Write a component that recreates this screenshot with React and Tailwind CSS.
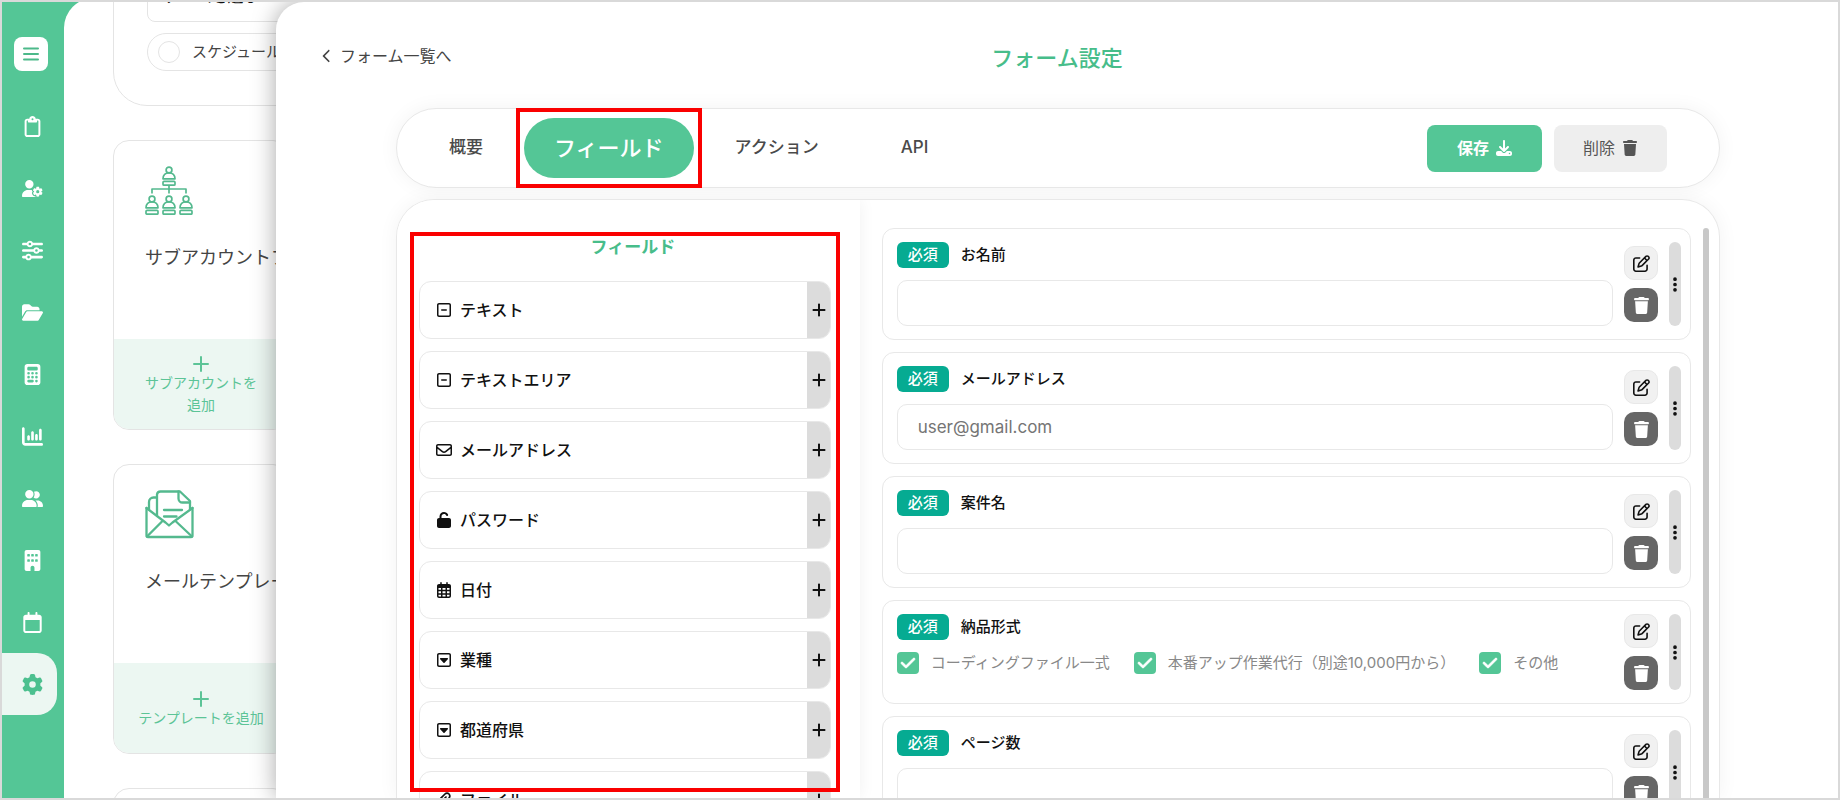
import React from 'react';
import {
  FaBuilding,
  FaCalculator,
  FaChartColumn,
  FaCheck,
  FaChevronLeft,
  FaDownload,
  FaEllipsisVertical,
  FaFolderOpen,
  FaGear,
  FaPaperclip,
  FaPlus,
  FaRegCalendar,
  FaRegCalendarDays,
  FaRegClipboard,
  FaRegEnvelope,
  FaRegPenToSquare,
  FaRegSquareCaretDown,
  FaRegSquareMinus,
  FaSliders,
  FaTrash,
  FaUnlock,
  FaUserGear,
  FaUserGroup,
} from 'react-icons/fa6';

const navItems = [
  { label: 'フォーム', icon: FaRegClipboard },
  { label: 'ユーザー設定', icon: FaUserGear },
  { label: '調整', icon: FaSliders },
  { label: 'フォルダ', icon: FaFolderOpen },
  { label: '計算', icon: FaCalculator },
  { label: '分析', icon: FaChartColumn },
  { label: '顧客', icon: FaUserGroup },
  { label: '会社', icon: FaBuilding },
  { label: 'カレンダー', icon: FaRegCalendar },
  { label: '設定', icon: FaGear, active: true },
];

const tabs = [
  { label: '概要' },
  { label: 'フィールド', active: true },
  { label: 'アクション' },
  { label: 'API' },
];

const fieldTypes = [
  { label: 'テキスト', icon: FaRegSquareMinus },
  { label: 'テキストエリア', icon: FaRegSquareMinus },
  { label: 'メールアドレス', icon: FaRegEnvelope },
  { label: 'パスワード', icon: FaUnlock },
  { label: '日付', icon: FaRegCalendarDays },
  { label: '業種', icon: FaRegSquareCaretDown },
  { label: '都道府県', icon: FaRegSquareCaretDown },
  { label: 'ファイル', icon: FaPaperclip },
];

const formFields = [
  { id: 'name', label: 'お名前' },
  { id: 'email', label: 'メールアドレス', placeholder: 'user@gmail.com' },
  { id: 'project', label: '案件名' },
  {
    id: 'delivery',
    label: '納品形式',
    options: ['コーディングファイル一式', '本番アップ作業代行（別途10,000円から）', 'その他'],
  },
  { id: 'pages', label: 'ページ数' },
];

const Person = ({ x, y }) => (
  <g>
    <circle cx={x} cy={y + 4} r="2.9" />
    <path d={`M${x - 6} ${y + 12.8}c0-3.6 2.4-6 6-6s6 2.4 6 6z`} />
    <rect x={x - 6} y={y + 15.4} width="12" height="3.8" rx="1" />
  </g>
);

const OrgIcon = () => (
  <svg viewBox="0 0 49 49" className="h-[49px] w-[49px] shrink-0" fill="none" stroke="#54b98e" strokeWidth="1.7" strokeLinejoin="round" aria-hidden="true">
    <Person x={24} y={0} />
    <Person x={7} y={29} />
    <Person x={24} y={29} />
    <Person x={41} y={29} />
    <path d="M24 19.4v8M7 27.5V23h34v4.5" />
  </svg>
);

const LetterIcon = () => (
  <svg viewBox="0 0 49 49" className="h-[49px] w-[49px] shrink-0" fill="none" stroke="#54b98e" strokeWidth="2.3" strokeLinecap="round" strokeLinejoin="round" aria-hidden="true">
    <path d="M1.5 18v27.5A1.5 1.5 0 0 0 3 47h43a1.5 1.500 0 0 0 1.500-1.500V18" />
    <path d="M1.5 18l19 14.500L24 35.500l3.500-3L47.500 18" />
    <path d="M2 46.500l15-15M47 46.500l-16-15" />
    <path d="M4 19.500V12a4.500 4.500 0 0 1 4.500-4.500H11" />
    <path d="M12 26V4.500A3.500 3.500 0 0 1 15.500 1.500H35l10 9.500v8.500" />
    <path d="M33.500 1.500v7a4 4 0 0 0 4 4H45" />
    <path d="M19 20h18M19 26.500h12.500" />
  </svg>
);

const SettingCard = ({ icon, title, action }) => (
  <section className="flex h-[290px] w-44 shrink-0 flex-col overflow-hidden rounded-2xl border border-[#e4e4e4] bg-white">
    <div className="flex flex-col gap-[29px] px-[31px] pt-[25px]">
      {icon}
      <h2 className="text-lg leading-7 whitespace-nowrap text-[#444]">{title}</h2>
    </div>
    <button type="button" className="mt-auto flex h-[90px] flex-col items-center justify-center bg-[#ecf7f2] pt-1 text-[#5cc497]">
      <svg viewBox="0 0 16 16" className="h-4 w-4" stroke="currentColor" strokeWidth="2" strokeLinecap="round" aria-hidden="true">
        <path d="M8 1v14M1 8h14" />
      </svg>
      <span className="text-sm leading-[22px] whitespace-pre-line">{action}</span>
    </button>
  </section>
);

const Sidebar = () => (
  <aside className="w-[62px] shrink-0 pt-[35px]">
    <button type="button" aria-label="メニュー" className="ml-3 flex h-[34px] w-[34px] items-center justify-center rounded-lg bg-white">
      <svg viewBox="0 0 16 16" className="h-4 w-4" stroke="#4cb98a" strokeWidth="2" strokeLinecap="round" aria-hidden="true">
        <path d="M1 2.500h14M1 8h14M1 13.500h14" />
      </svg>
    </button>
    <nav className="mt-6">
      {navItems.map(({ label, icon: Icon, active }) => (
        <a
          key={label}
          href="#"
          aria-label={label}
          className={
            active
              ? 'flex h-[62px] w-[55px] items-center rounded-r-[20px] bg-[#ecf7f2] text-[#4cc08f]'
              : 'flex h-[62px] w-[55px] items-center text-white'
          }
        >
          <span className="flex w-[60px] shrink-0 justify-center">
            <Icon className="h-[21px] w-auto" />
          </span>
        </a>
      ))}
    </nav>
  </aside>
);

const SettingsPage = () => (
  <main className="-mt-1 min-w-0 flex-1 overflow-hidden rounded-tl-[30px] bg-white">
    <div className="-mt-9 flex flex-col gap-[34px] pl-[49px]">
      <section className="flex shrink-0 flex-col gap-[11px] rounded-b-[34px] border border-[#e4e4e4] px-[33px] pt-[7px] pb-[34px]">
        <select aria-label="チーム" className="h-[52px] w-full appearance-none rounded-lg border border-[#e4e4e4] px-4 text-base text-[#111]">
          <option>チームを選ぶ</option>
        </select>
        <label className="flex h-[38px] items-center gap-3 rounded-full border border-[#e4e4e4] px-[10px] text-[15px] text-[#444]">
          <input type="radio" name="team-view" className="h-[22px] w-[22px] appearance-none rounded-full border border-[#e4e4e4]" />
          スケジュール
        </label>
      </section>
      <SettingCard icon={<OrgIcon />} title="サブアカウントプラン" action={'サブアカウントを\n追加'} />
      <SettingCard icon={<LetterIcon />} title="メールテンプレート" action="テンプレートを追加" />
      <SettingCard icon={<OrgIcon />} title="チーム" action="チームを追加" />
    </div>
  </main>
);

const TabBar = () => (
  <div className="flex h-20 shrink-0 items-center rounded-full border border-[#e8e8e8] bg-white pr-[52px] pl-[11px] shadow-[0_0_20px_rgba(0,0,0,0.05)]">
    <div role="tablist" className="flex items-center">
      {tabs.map((tab) =>
        tab.active ? (
          <button key={tab.label} type="button" role="tab" aria-selected="true" className="relative h-[60px] rounded-full bg-[#54c696] px-[30px] text-[22px] font-medium text-white">
            {tab.label}
            {/* 強調枠 */}
            <span className="pointer-events-none absolute -inset-x-2 -inset-y-[10px] border-4 border-[#fa0000]" />
          </button>
        ) : (
          <button key={tab.label} type="button" role="tab" aria-selected="false" className="h-[60px] px-[41px] text-[17px] font-medium text-[#4a4a4a]">
            {tab.label}
          </button>
        )
      )}
    </div>
    <div className="ml-auto flex gap-3">
      <button type="button" className="flex h-[47px] items-center gap-[7px] rounded-lg bg-[#54c696] px-[30px] text-base font-bold text-white">
        保存
        <FaDownload className="h-4 w-auto" />
      </button>
      <button type="button" className="flex h-[47px] items-center gap-[7px] rounded-lg bg-[#eee] px-[29px] text-base text-[#555]">
        削除
        <FaTrash className="h-4 w-auto" />
      </button>
    </div>
  </div>
);

const FieldPalette = () => (
  <div className="relative z-10 w-[35%] shrink-0 bg-white pt-[35px] pr-[29px] pl-[22px] shadow-[0_0_16px_rgba(0,0,0,0.06)]">
    <h2 className="mb-[22px] pl-4 text-center text-[17px] leading-6 font-bold text-[#47bd8a]">フィールド</h2>
    <ul className="flex flex-col gap-3">
      {fieldTypes.map(({ label, icon: Icon }) => (
        <li key={label} className="flex h-[58px] shrink-0 overflow-hidden rounded-xl border border-[#e8e8e8] text-[#111]">
          <span className="flex flex-1 items-center gap-2 pl-4 text-base font-medium">
            <Icon className="h-4 w-auto" />
            {label}
          </span>
          <button type="button" aria-label={`${label}を追加`} className="-m-px flex w-6 items-center justify-center bg-[#dcdcdc]">
            <FaPlus className="h-4 w-auto" />
          </button>
        </li>
      ))}
    </ul>
    <span className="pointer-events-none absolute top-8 right-5 bottom-[6px] left-[13px] border-4 border-[#fa0000]" />
  </div>
);

const CheckOption = ({ label }) => (
  <label className="flex items-center gap-3">
    <span className="relative h-[22px] w-[22px]">
      <input type="checkbox" defaultChecked className="block h-[22px] w-[22px] appearance-none rounded bg-[#54c696]" />
      <FaCheck className="pointer-events-none absolute inset-0 m-auto h-4 w-4 stroke-white stroke-[24px] text-white" />
    </span>
    {label}
  </label>
);

const FormField = ({ field }) => (
  <div className="flex shrink-0 gap-[11px] rounded-xl border border-[#e8e8e8] py-[13px] pr-[9px] pl-[14px]">
    <div className="flex min-w-0 flex-1 flex-col gap-3">
      <div className="flex items-center gap-3 text-[15px] leading-[26px]">
        <span className="rounded-md bg-[#06ab92] px-[11px] font-medium text-white">必須</span>
        {field.options ? (
          <span className="font-medium text-[#111]">{field.label}</span>
        ) : (
          <label htmlFor={field.id} className="font-medium text-[#111]">{field.label}</label>
        )}
      </div>
      {field.options ? (
        <div className="flex gap-6 text-[15px] leading-[22px] text-[#888]">
          {field.options.map((option) => (
            <CheckOption key={option} label={option} />
          ))}
        </div>
      ) : (
        <input
          id={field.id}
          type="text"
          placeholder={field.placeholder}
          className="h-[46px] w-full rounded-[10px] border border-[#e8e8e8] px-5 text-[17px] placeholder:text-[#757575]"
        />
      )}
    </div>
    <div className="flex flex-col justify-center gap-2">
      <button type="button" aria-label="編集" className="flex h-[34px] w-[34px] items-center justify-center rounded-[10px] border border-[#e8e8e8] bg-[#f1f1f1] text-[#111]">
        <FaRegPenToSquare className="h-[17px] w-auto" />
      </button>
      <button type="button" aria-label="削除" className="flex h-[34px] w-[34px] items-center justify-center rounded-[10px] bg-[#666] text-white">
        <FaTrash className="h-[17px] w-auto" />
      </button>
    </div>
    <button type="button" aria-label="並べ替え" className="flex w-3 items-center justify-center rounded-full bg-[#dcdcdc] text-[#111]">
      <FaEllipsisVertical className="h-[17px] w-auto" />
    </button>
  </div>
);

const FormDrawer = () => (
  <div className="absolute inset-y-0 right-0 left-[274px] flex flex-col rounded-tl-[28px] bg-white shadow-[0_0_24px_rgba(0,0,0,0.35)]">
    <header className="mt-[38px] grid h-9 shrink-0 grid-cols-[1fr_auto_1fr] items-center">
      <a href="#" className="flex items-center gap-[6px] self-start pl-11 text-base leading-8 text-[#444]">
        <FaChevronLeft className="h-[14px] w-auto" />
        フォーム一覧へ
      </a>
      <h1 className="text-[22px] font-medium text-[#47bd8a]">フォーム設定</h1>
    </header>
    <div className="flex min-h-0 flex-1 flex-col gap-[11px] overflow-hidden pt-8 pr-[118px] pl-[120px]">
      <TabBar />
      <div className="flex min-h-0 flex-1 overflow-hidden rounded-t-[38px] border border-b-0 border-[#e8e8e8] bg-white shadow-[0_0_20px_rgba(0,0,0,0.05)]">
        <FieldPalette />
        <div className="flex min-w-0 flex-1 gap-3 pt-7 pr-[10px] pl-[22px]">
          <form className="flex min-w-0 flex-1 flex-col gap-3">
            {formFields.map((field) => (
              <FormField key={field.id} field={field} />
            ))}
          </form>
          <div className="w-[6px] shrink-0 rounded-t-full bg-[#c8c8c8]" />
        </div>
      </div>
    </div>
  </div>
);

const App = () => {
  return (
    <div className="h-screen overflow-hidden border-2 border-[#d9d9d9] bg-[#54c696] font-[Inter,'Noto_Sans_CJK_JP',sans-serif]">
      <div className="relative flex h-full overflow-hidden">
        <Sidebar />
        <SettingsPage />
        <FormDrawer />
      </div>
    </div>
  );
};

export default App;
